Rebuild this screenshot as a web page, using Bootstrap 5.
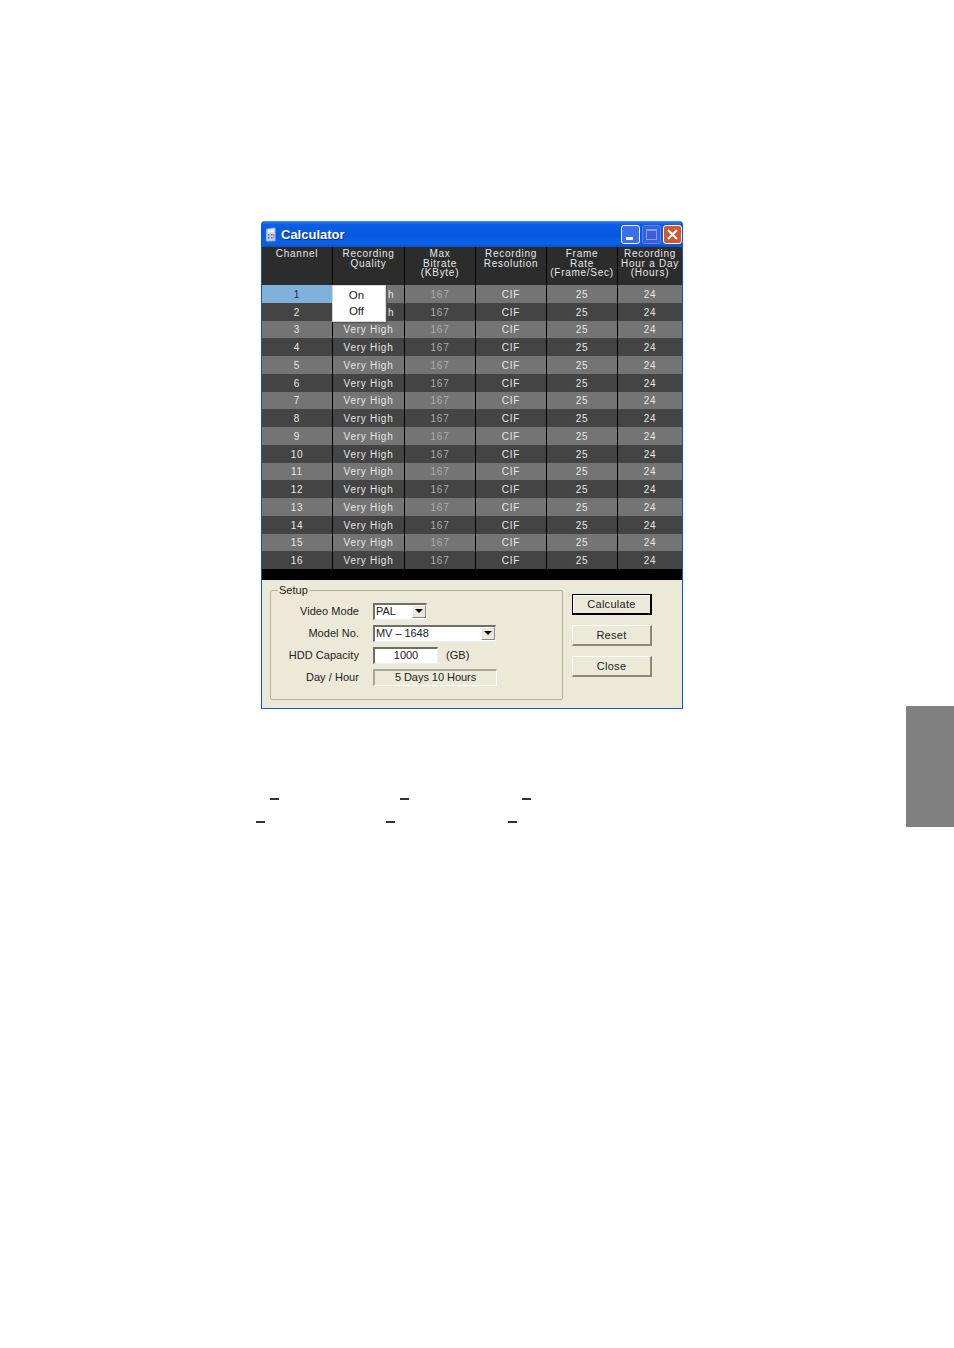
<!DOCTYPE html>
<html lang="en">
<head>
<meta charset="utf-8">
<title>Calculator</title>
<link href="https://cdn.jsdelivr.net/npm/bootstrap@5.3.0/dist/css/bootstrap.min.css" rel="stylesheet">
<style>
html,body{background:#fff;height:1348px;overflow:hidden}
.sheet{width:954px;height:1348px}
.main-col{margin-left:256px;padding-top:221px;width:430px}
.side-tab{width:48px;height:121px;margin-top:706px;background:#808080}
.xp-win{margin-left:5px;width:422px;height:488px;background:#0855dd;border-radius:4px 4px 0 0;padding:0 1px 1px;font-family:"Liberation Sans",Arial,sans-serif;position:relative}
.xp-title{height:26px;background:linear-gradient(#3f8df5 0,#0a5fe6 12%,#0758e0 55%,#0a63ea 85%,#0653d0 100%);border-radius:4px 4px 0 0;padding:1px 0 0 3px}
.xp-name{color:#fff;font-weight:700;font-size:13px;margin-left:5px;text-shadow:1px 1px 0 #0a2f8c}
.xp-ctl{width:19px;height:19px;border:1px solid #fff;border-radius:3px;display:block}
.ctl-gap{gap:2px}
.ctl-min{background:#3d6fe8}
.ctl-max{background:#3a5fd8;border-color:#5f86e6}
.ctl-close{background:#d9532c}
.grid-tbl{table-layout:fixed;border-collapse:separate;border-spacing:0;width:420px;background:#2b2b2b;color:#e6e6e6;font-size:10px;letter-spacing:.72px}
.grid-tbl th{height:38px;font-weight:400;line-height:9.5px;text-align:center;vertical-align:top;padding:2px 0 0;border-right:1px solid #000;background:#2c2c2c}
.grid-tbl td{height:17.75px;padding:1px 0 0;line-height:15px;text-align:center;vertical-align:middle;border-right:1px solid #000}
.grid-tbl th:last-child,.grid-tbl td:last-child{border-right:0}
.grid-tbl tr.odd td{background:#747474}
.grid-tbl tr.even td{background:#444}
.grid-tbl td.dim{color:#ababab}
.grid-tbl td.sel{background:#7fb1dd!important;color:#1c2c3c}
.grid-tbl td.peek{text-align:left;padding-left:55px}
.pop-menu{position:absolute;left:71px;top:64px;width:54px;height:37px;background:#fff;border:1px solid #d8d8d8;box-shadow:1px 1px 1px #555;color:#222;font-size:11.5px;text-align:center;line-height:16px;padding:1px 5px 0 0}
.black-band{height:11px;background:#000}
.xp-panel{height:128px;background:#ece9d8;padding:4px 19px 0 8px;color:#222;font-size:11px;letter-spacing:.05px}
.setup-box{width:293px;height:116px;border:1px solid #b5b2a0;border-radius:2px;margin:0;padding:4px 0 0;min-width:0}
.setup-box legend{float:none;width:auto;font-size:11px;line-height:12px;margin:0 0 0 7px;padding:0 1px;letter-spacing:0}
.f-row{height:22px;align-items:center}
.f-label{width:88px;text-align:right;margin-right:14px}
.f-val{height:17px;background:#fff;border:1px solid #8d8b80;border-right-color:#eee;border-bottom-color:#eee;border-left:2px solid #716f64;border-top:2px solid #716f64;line-height:12px;letter-spacing:-.05px;font-size:11px;padding-left:1px}
.w-mode{width:54px}.w-model{width:123px}.w-hdd{width:65px;text-align:center;padding:0}.w-day{width:124px;background:#ece9d8;text-align:center;padding:0;border-color:#aca899;border-right-color:#fff;border-bottom-color:#fff}
.drop-btn{width:14px;height:13px;background:#ece9d8;border:1px solid #888;border-top-color:#fff;border-left-color:#fff;margin-left:auto;display:flex;align-items:center;justify-content:center}
.drop-arrow{width:0;height:0;border-left:4px solid transparent;border-right:4px solid transparent;border-top:4px solid #000}
.xp-btn{width:80px;height:21px;padding:0;font-size:11px;letter-spacing:.3px;line-height:18px;color:#222;background:#ece9d8;border:1px solid #fff;border-right:2px solid #8a8878;border-bottom:2px solid #8a8878;border-radius:0}
.xp-btn.def{border:2px solid #000;border-width:1px 2px 2px 1px;background:#ece9d8;box-shadow:inset 1px 1px 0 #fff}
.btn-col{gap:10px;margin-top:10px;margin-left:9px}
.dash-row{height:2px}
.dash-a{margin-top:89px;padding-left:14px}
.dash-b{margin-top:21px}
.dash{width:9px;height:2px;background:#333;display:block}
.g1{margin-right:121px}.g2{margin-right:113px}
</style>
</head>
<body>
<div class="sheet d-flex justify-content-between">
  <div class="main-col">
    <div class="xp-win">
      <div class="xp-title d-flex align-items-center">
        <svg width="11" height="15" viewBox="0 0 11 15"><path d="M1 2l8-1.5 1.5 1V14L2 14.5 1 13.5z" fill="#b9cdf0" stroke="#5d7fc0" stroke-width=".6"/><rect x="3" y="2.5" width="6" height="3" fill="#eef5ff"/><path d="M3 7h1.5v1.5H3zM6 7h1.5v1.5H6zM3 10h1.5v1.5H3zM6 10h1.5v1.5H6z" fill="#5574b8"/><rect x="8.2" y="7" width="1.2" height="4.5" fill="#d98a5c"/></svg>
        <span class="xp-name flex-grow-1">Calculator</span>
        <span class="d-flex ctl-gap">
          <svg class="xp-ctl ctl-min" viewBox="0 0 17 17"><rect x="4" y="11" width="7" height="3" fill="#fff"/></svg>
          <svg class="xp-ctl ctl-max" viewBox="0 0 17 17"><rect x="3.5" y="3.5" width="10" height="10" fill="none" stroke="#7f9df0"/><rect x="3" y="3" width="11" height="2" fill="#7f9df0"/></svg>
          <svg class="xp-ctl ctl-close" viewBox="0 0 17 17"><path d="M4 4l9 9M13 4l-9 9" stroke="#fff" stroke-width="2.2"/></svg>
        </span>
      </div>
      <table class="grid-tbl">
        <colgroup><col style="width:71px"><col style="width:72px"><col style="width:71px"><col style="width:71px"><col style="width:71px"><col style="width:64px"></colgroup>
        <thead><tr><th>Channel</th><th>Recording<br>Quality</th><th>Max<br>Bitrate<br>(KByte)</th><th>Recording<br>Resolution</th><th>Frame<br>Rate<br>(Frame/Sec)</th><th>Recording<br>Hour a Day<br>(Hours)</th></tr></thead>
        <tbody>
          <tr class="odd"><td class="sel">1</td><td class="peek">h</td><td class="dim">167</td><td>CIF</td><td>25</td><td>24</td></tr>
          <tr class="even"><td>2</td><td class="peek">h</td><td class="dim">167</td><td>CIF</td><td>25</td><td>24</td></tr>
          <tr class="odd"><td>3</td><td>Very High</td><td class="dim">167</td><td>CIF</td><td>25</td><td>24</td></tr>
          <tr class="even"><td>4</td><td>Very High</td><td class="dim">167</td><td>CIF</td><td>25</td><td>24</td></tr>
          <tr class="odd"><td>5</td><td>Very High</td><td class="dim">167</td><td>CIF</td><td>25</td><td>24</td></tr>
          <tr class="even"><td>6</td><td>Very High</td><td class="dim">167</td><td>CIF</td><td>25</td><td>24</td></tr>
          <tr class="odd"><td>7</td><td>Very High</td><td class="dim">167</td><td>CIF</td><td>25</td><td>24</td></tr>
          <tr class="even"><td>8</td><td>Very High</td><td class="dim">167</td><td>CIF</td><td>25</td><td>24</td></tr>
          <tr class="odd"><td>9</td><td>Very High</td><td class="dim">167</td><td>CIF</td><td>25</td><td>24</td></tr>
          <tr class="even"><td>10</td><td>Very High</td><td class="dim">167</td><td>CIF</td><td>25</td><td>24</td></tr>
          <tr class="odd"><td>11</td><td>Very High</td><td class="dim">167</td><td>CIF</td><td>25</td><td>24</td></tr>
          <tr class="even"><td>12</td><td>Very High</td><td class="dim">167</td><td>CIF</td><td>25</td><td>24</td></tr>
          <tr class="odd"><td>13</td><td>Very High</td><td class="dim">167</td><td>CIF</td><td>25</td><td>24</td></tr>
          <tr class="even"><td>14</td><td>Very High</td><td class="dim">167</td><td>CIF</td><td>25</td><td>24</td></tr>
          <tr class="odd"><td>15</td><td>Very High</td><td class="dim">167</td><td>CIF</td><td>25</td><td>24</td></tr>
          <tr class="even"><td>16</td><td>Very High</td><td class="dim">167</td><td>CIF</td><td>25</td><td>24</td></tr>
        </tbody>
      </table>
      <div class="pop-menu"><div>On</div><div>Off</div></div>
      <div class="black-band"></div>
      <div class="xp-panel d-flex">
        <fieldset class="setup-box">
          <legend>Setup</legend>
          <div class="f-row d-flex"><span class="f-label">Video Mode</span><div class="f-val w-mode d-flex"><span>PAL</span><span class="drop-btn"><i class="drop-arrow"></i></span></div></div>
          <div class="f-row d-flex"><span class="f-label">Model No.</span><div class="f-val w-model d-flex"><span>MV – 1648</span><span class="drop-btn"><i class="drop-arrow"></i></span></div></div>
          <div class="f-row d-flex"><span class="f-label">HDD Capacity</span><div class="f-val w-hdd">1000</div><span class="ms-2">(GB)</span></div>
          <div class="f-row d-flex"><span class="f-label">Day / Hour</span><div class="f-val w-day">5 Days 10 Hours</div></div>
        </fieldset>
        <div class="btn-col d-flex flex-column">
          <button type="button" class="btn xp-btn def">Calculate</button>
          <button type="button" class="btn xp-btn">Reset</button>
          <button type="button" class="btn xp-btn">Close</button>
        </div>
      </div>
    </div>
    <div class="dash-row dash-a d-flex"><span class="dash g1"></span><span class="dash g2"></span><span class="dash"></span></div>
    <div class="dash-row dash-b d-flex"><span class="dash g1"></span><span class="dash g2"></span><span class="dash"></span></div>
  </div>
  <div class="side-tab"></div>
</div>
<script src="https://cdn.jsdelivr.net/npm/bootstrap@5.3.0/dist/js/bootstrap.bundle.min.js"></script>
</body>
</html>
